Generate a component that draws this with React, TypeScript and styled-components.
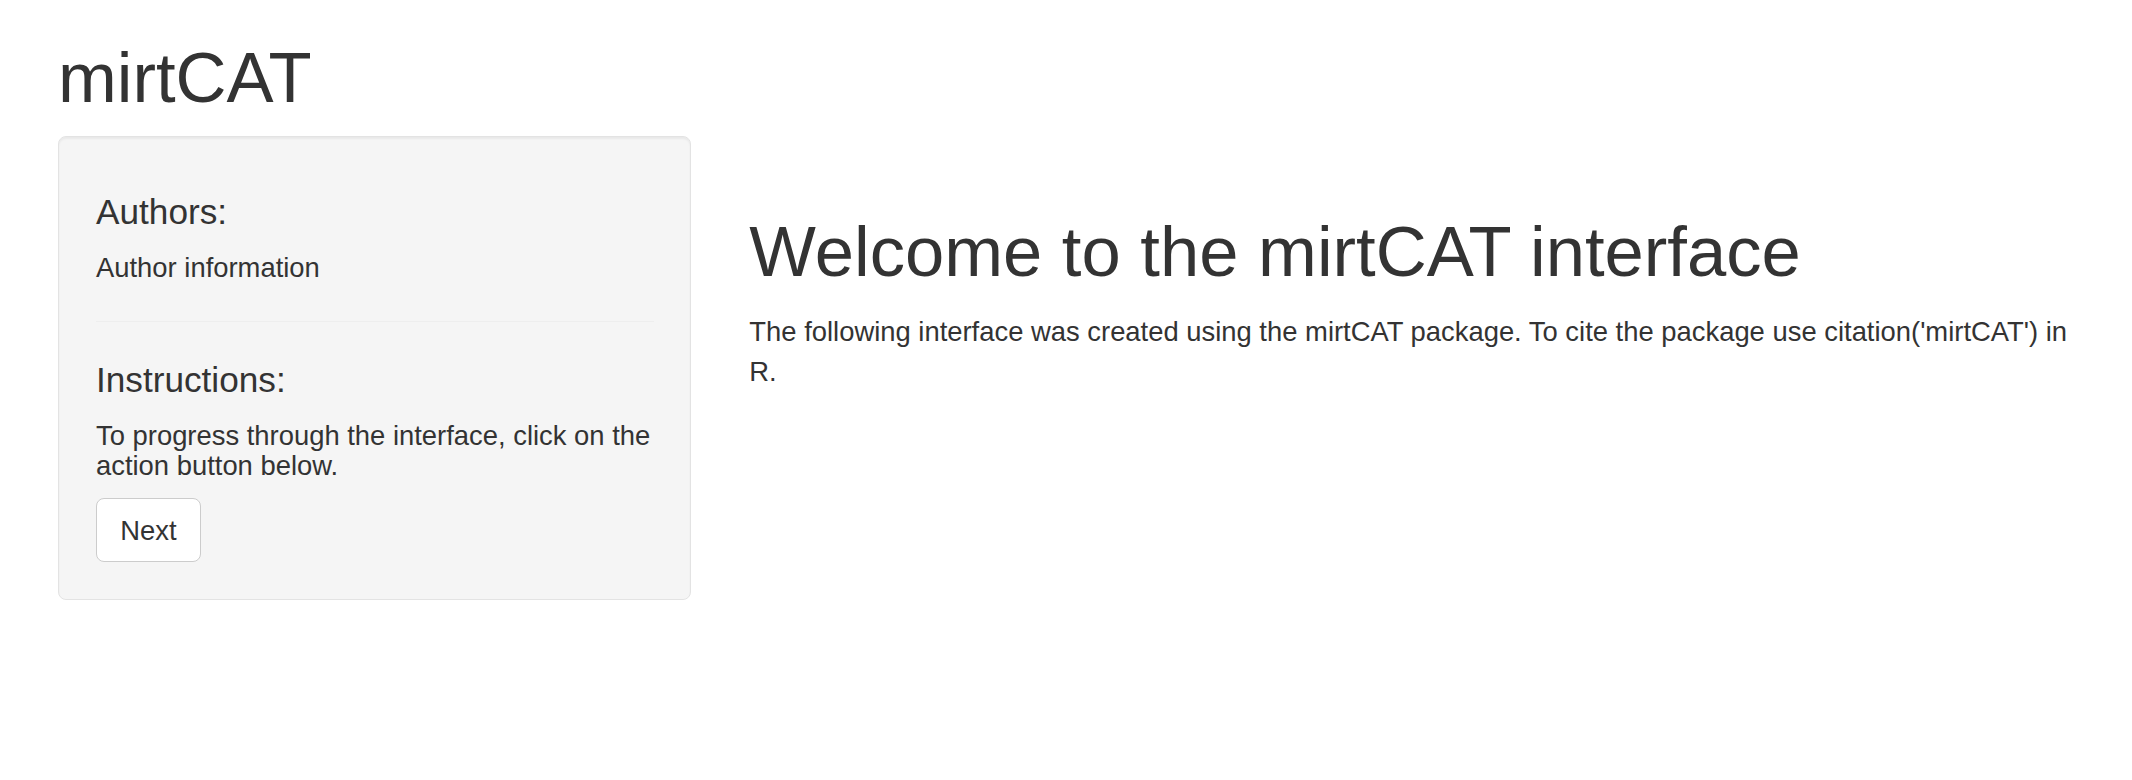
import React from 'react';
import styled, { createGlobalStyle } from 'styled-components';

const GlobalStyle = createGlobalStyle`
  html, body {
    margin: 0;
    padding: 0;
    background: #ffffff;
  }
  body {
    font-family: "Liberation Sans", Arial, Helvetica, sans-serif;
    font-size: 27.4px;
    line-height: 1.42857;
    color: #333333;
  }
  * {
    box-sizing: border-box;
  }
`;

const Page = styled.div`
  padding: 0 29px;
`;

const TitleBar = styled.h1`
  margin: 38.6px 0 19.3px 0;
  padding: 0 29px;
  font-size: 70.6px;
  font-weight: 500;
  line-height: 1.1;
`;

const Row = styled.div`
  display: flex;
  align-items: flex-start;
`;

const Column = styled.div<{ $span: number }>`
  flex: 0 0 ${props => (props.$span / 12) * 100}%;
  max-width: ${props => (props.$span / 12) * 100}%;
  padding: 0 29px;
`;

const Well = styled.div`
  background: #f5f5f5;
  border: 1px solid #e3e3e3;
  border-radius: 8px;
  padding: 37px 36px 37px 37px;
  box-shadow: inset 0 2px 2px rgba(0, 0, 0, 0.05);

  & > *:first-child {
    margin-top: 19.5px;
  }
`;

const SideHeading = styled.h4`
  margin: 19.3px 0;
  font-size: 35.2px;
  font-weight: 500;
  line-height: 1.1;
`;

const SideText = styled.h5`
  margin: 21px 0 17px 0;
  font-size: 27.4px;
  font-weight: 500;
  line-height: 1.1;
`;

const Divider = styled.hr`
  margin: 38.6px 0;
  border: 0;
  border-top: 1px solid #eeeeee;
`;

const ActionButton = styled.button`
  display: inline-block;
  padding: 11.6px 23.2px;
  font-family: inherit;
  font-size: 27.4px;
  line-height: 1.42857;
  color: #333333;
  background: #ffffff;
  border: 1px solid #cccccc;
  border-radius: 8px;
  cursor: pointer;

  &:hover {
    background: #e6e6e6;
    border-color: #adadad;
  }
`;

const WelcomeHeading = styled.h1`
  margin: 77.2px 0 22px 0;
  font-size: 70.6px;
  font-weight: 500;
  line-height: 1.1;
`;

const Paragraph = styled.p`
  margin: 0 0 19.3px 0;
`;

const App: React.FC = () => {
  return (
    <>
      <GlobalStyle />
      <Page>
        <TitleBar>mirtCAT</TitleBar>
        <Row>
          <Column $span={4}>
            <Well>
              <SideHeading>Authors:</SideHeading>
              <SideText>Author information</SideText>
              <Divider />
              <SideHeading>Instructions:</SideHeading>
              <SideText>
                To progress through the interface, click on the action button below.
              </SideText>
              <ActionButton type="button">Next</ActionButton>
            </Well>
          </Column>
          <Column $span={8}>
            <WelcomeHeading>Welcome to the mirtCAT interface</WelcomeHeading>
            <Paragraph>
              The following interface was created using the mirtCAT package. To cite the
              package use citation('mirtCAT') in R.
            </Paragraph>
          </Column>
        </Row>
      </Page>
    </>
  );
};

export default App;
